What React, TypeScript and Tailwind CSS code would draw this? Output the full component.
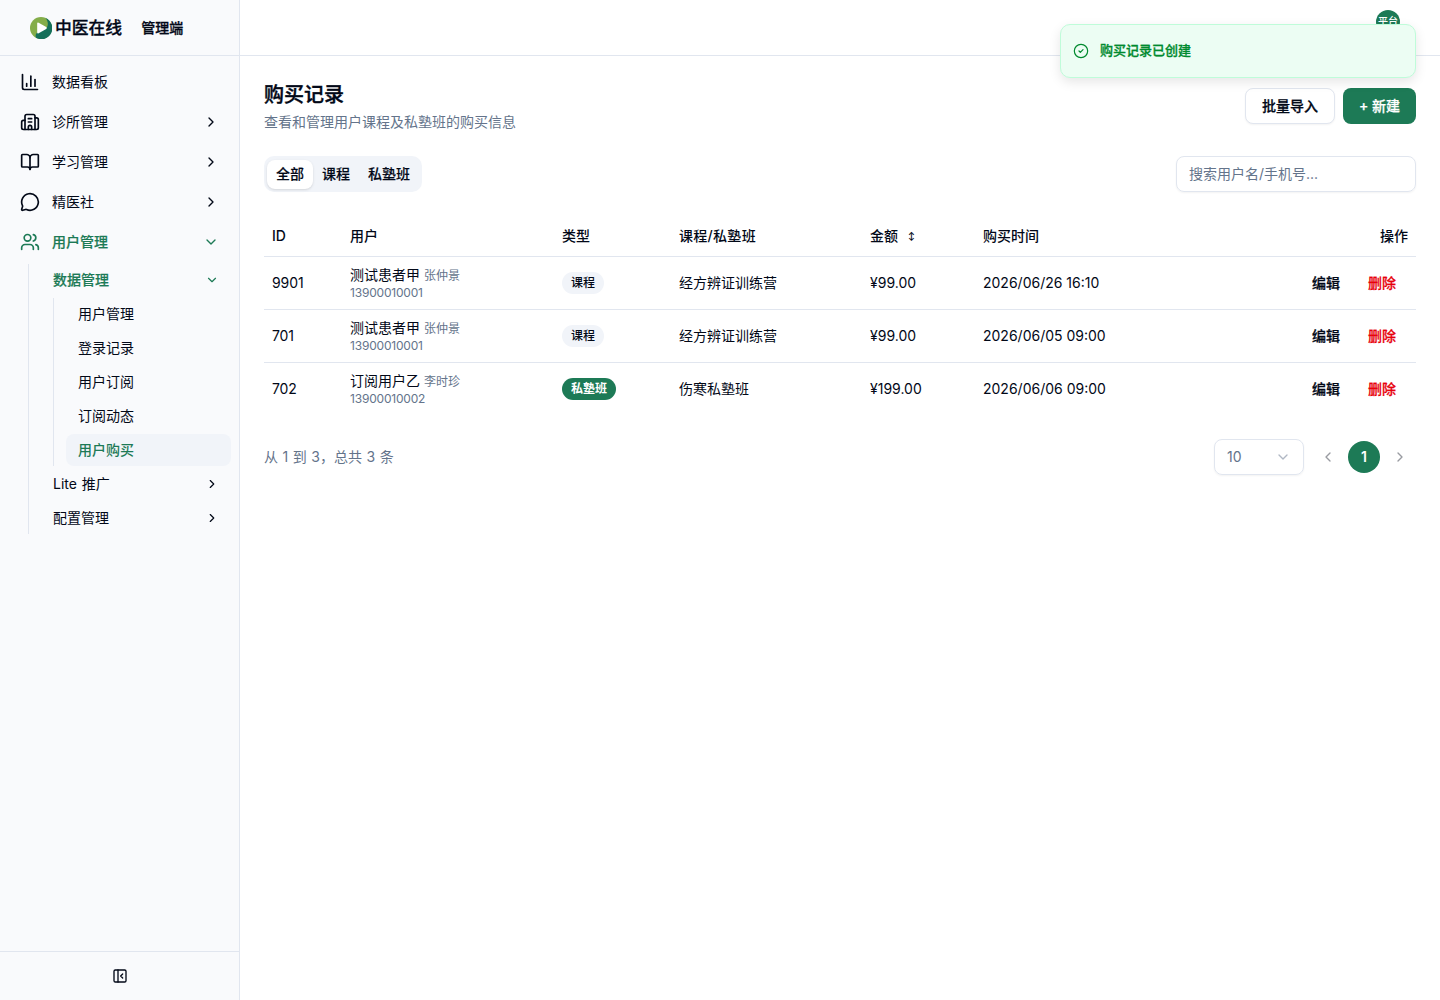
import React from 'react';
import {
  BookOpen,
  Building2,
  ChartColumn,
  ChevronDown,
  ChevronLeft,
  ChevronRight,
  CircleCheck,
  MessageCircle,
  PanelLeftClose,
  Users,
} from 'lucide-react';

const records = [
  { id: '9901', user: '测试患者甲', realName: '张仲景', phone: '13900010001', type: '课程', name: '经方辨证训练营', amount: '¥99.00', time: '2026/06/26 16:10' },
  { id: '701', user: '测试患者甲', realName: '张仲景', phone: '13900010001', type: '课程', name: '经方辨证训练营', amount: '¥99.00', time: '2026/06/05 09:00' },
  { id: '702', user: '订阅用户乙', realName: '李时珍', phone: '13900010002', type: '私塾班', name: '伤寒私塾班', amount: '¥199.00', time: '2026/06/06 09:00' },
];

const menu = [
  { label: '数据看板', icon: ChartColumn },
  { label: '诊所管理', icon: Building2, arrow: true },
  { label: '学习管理', icon: BookOpen, arrow: true },
  { label: '精医社', icon: MessageCircle, arrow: true },
];

const userPages = ['用户管理', '登录记录', '用户订阅', '订阅动态', '用户购买'];

const Logo = () => (
  <svg className="w-[22px] h-[22px]" viewBox="0 0 22 22">
    <circle cx="11" cy="11" r="11" fill="#84ad49" />
    <path d="M15.5 1A11 11 0 1 1 6 20.8C5.2 18.5 5.8 16.5 7.5 15.5L16 11.5C18.8 8.5 18.2 4 15.5 1Z" fill="#15705a" />
    <path d="M7.2 6.6Q7.2 5 8.7 5.7L16.2 9.9Q17.6 11 16.2 12L8.7 16.3Q7.2 17 7.2 15.4Z" fill="#fff" />
  </svg>
);

const Sidebar = () => (
  <aside className="flex w-60 shrink-0 flex-col border-r border-[#e1e6ef] bg-[#f9fafc]">
    <div className="flex h-14 shrink-0 items-center border-b border-[#e1e6ef] pl-[30px]">
      <Logo />
      <span className="ml-[3px] text-[16.8px] font-medium leading-6 [-webkit-text-stroke:0.3px]">中医在线</span>
      <span className="ml-[19px] text-sm font-medium [-webkit-text-stroke:0.3px]">管理端</span>
    </div>

    <nav className="flex-1 px-2 pt-1.5">
      {menu.map(({ label, icon: Icon, arrow }) => (
        <div key={label} className="flex h-10 items-center px-3">
          <Icon className="h-5 w-5" />
          <span className="ml-3 flex-1">{label}</span>
          {arrow && <ChevronRight className="h-4 w-4" />}
        </div>
      ))}
      <div className="flex h-10 items-center px-3 font-medium text-[#1d7a56]">
        <Users className="h-5 w-5" />
        <span className="ml-3 flex-1 [-webkit-text-stroke:0.2px]">用户管理</span>
        <ChevronDown className="h-4 w-4" />
      </div>

      {/* Second level */}
      <div className="ml-5 mt-0.5 flex flex-col gap-0.5 border-l border-[#e1e6ef] pl-3">
        <div className="flex h-8 items-center px-3 font-medium text-[#1d7a56]">
          <span className="flex-1 [-webkit-text-stroke:0.2px]">数据管理</span>
          <ChevronDown className="h-3.5 w-3.5" />
        </div>
        <div className="ml-3 flex flex-col gap-0.5 border-l border-[#e1e6ef] pl-3">
          {userPages.map((page) => (
            <div
              key={page}
              className={
                page === '用户购买'
                  ? 'flex h-8 items-center rounded-lg bg-[#f1f4f9] px-3 font-medium text-[#1d7a56]'
                  : 'flex h-8 items-center px-3'
              }
            >
              {page}
            </div>
          ))}
        </div>
        {['Lite 推广', '配置管理'].map((label) => (
          <div key={label} className="flex h-8 items-center px-3">
            <span className="flex-1 [word-spacing:1px]">{label}</span>
            <ChevronRight className="h-3.5 w-3.5" />
          </div>
        ))}
      </div>
    </nav>

    <div className="flex h-[49px] items-center justify-center border-t border-[#e1e6ef]">
      <PanelLeftClose className="h-4 w-4" />
    </div>
  </aside>
);

const RecordTable = () => (
  <table className="mt-6 w-full table-fixed border-separate border-spacing-0 text-left">
    <colgroup>
      <col className="w-[78px]" />
      <col className="w-[212px]" />
      <col className="w-[117px]" />
      <col className="w-[191px]" />
      <col className="w-[113px]" />
      <col className="w-[200px]" />
      <col />
    </colgroup>
    <thead>
      <tr className="h-[41px] [&>th]:border-b [&>th]:border-[#e1e6ef] [&>th]:px-2 [&>th]:py-0 [&>th]:font-medium">
        <th>ID</th>
        <th>用户</th>
        <th>类型</th>
        <th className="tracking-[0.3px]">课程/私塾班</th>
        <th>
          <span className="flex items-center gap-2.5">
            金额 <span className="text-[8px] font-bold leading-none">↕</span>
          </span>
        </th>
        <th>购买时间</th>
        <th className="text-right">操作</th>
      </tr>
    </thead>
    <tbody>
      {records.map((r) => (
        <tr key={r.id} className="h-[53px] [&>td]:border-b [&>td]:border-[#e1e6ef] [&>td]:px-2 [&>td]:py-0 last:[&>td]:border-transparent">
          <td className="tracking-[-0.1px]">{r.id}</td>
          <td>
            <div className="leading-5">
              {r.user} <span className="text-xs text-[#64748b]">{r.realName}</span>
            </div>
            <div className="text-xs leading-4 tracking-[-0.2px] text-[#64748b]">{r.phone}</div>
          </td>
          <td>
            <span
              className={
                r.type === '私塾班'
                  ? 'inline-flex h-[22px] items-center rounded-full bg-[#1d7a56] px-[9px] align-middle text-xs font-semibold text-white'
                  : 'inline-flex h-[22px] items-center rounded-full bg-[#f1f4f9] px-[9px] align-middle text-xs font-medium'
              }
            >
              {r.type}
            </span>
          </td>
          <td>{r.name}</td>
          <td>{r.amount}</td>
          <td>{r.time}</td>
          <td>
            <div className="flex justify-end gap-7 pr-3 font-medium [-webkit-text-stroke:0.25px]">
              <span>编辑</span>
              <span className="text-[#e7000b]">删除</span>
            </div>
          </td>
        </tr>
      ))}
    </tbody>
  </table>
);

const Toast = () => (
  <div className="absolute right-6 top-6 flex h-[54px] w-[356px] items-center rounded-[10px] border border-[#bffcd9] bg-[#ecfdf3] pl-3 text-[13px] font-medium text-[#008a2e] shadow-[0_4px_12px_rgba(0,0,0,0.1)]">
    <CircleCheck className="h-4 w-4" strokeWidth={1.8} />
    <span className="ml-[11px] pb-0.5 [-webkit-text-stroke:0.3px]">购买记录已创建</span>
  </div>
);

const App = () => {
  return (
    <div className="relative flex h-[1000px] w-full overflow-hidden bg-white font-['Inter','Noto_Sans_CJK_SC',sans-serif] text-sm text-[#020817]">
      <Sidebar />

      <div className="flex min-w-0 flex-1 flex-col">
        <header className="flex h-14 shrink-0 items-start justify-end border-b border-[#e1e6ef] pr-10 pt-2.5">
          <div className="flex h-6 w-6 items-center justify-center rounded-full bg-[#1d7a56] pb-0.5 text-[10px] font-medium text-white">
            平台
          </div>
        </header>

        <main className="p-6">
          <div className="flex items-center justify-between">
            <div>
              <h1 className="pt-px text-xl font-medium leading-7 [-webkit-text-stroke:0.4px]">购买记录</h1>
              <p className="mt-[3px] leading-5 text-[#64748b]">查看和管理用户课程及私塾班的购买信息</p>
            </div>
            <div className="flex gap-2 font-medium [-webkit-text-stroke:0.25px]">
              <button className="h-9 w-[90px] rounded-lg border border-[#e1e6ef] bg-white shadow-xs">批量导入</button>
              <button className="h-9 w-[73px] rounded-lg bg-[#1d7a56] text-white">+ 新建</button>
            </div>
          </div>

          <div className="mt-6 flex items-center justify-between">
            <div className="flex h-9 items-center rounded-[10px] bg-[#f1f4f9] p-[3px] font-medium [-webkit-text-stroke:0.15px]">
              <span className="flex h-[29px] items-center rounded-lg bg-white px-[9px] shadow-sm">全部</span>
              <span className="px-[9px]">课程</span>
              <span className="px-[9px]">私塾班</span>
            </div>
            <input
              className="h-9 w-60 rounded-lg border border-[#e1e6ef] px-3 pb-0.5 shadow-xs outline-none placeholder:text-[#64748b]"
              placeholder="搜索用户名/手机号..."
            />
          </div>

          <RecordTable />

          {/* Pagination */}
          <div className="mt-[23px] flex items-center justify-between text-[#64748b]">
            <span className="[word-spacing:0.6px]">从 1 到 3，总共 3 条</span>
            <div className="flex items-center">
              <div className="mr-2 flex h-9 w-[90px] items-center justify-between rounded-lg border border-[#e1e6ef] px-3 shadow-xs">
                10
                <ChevronDown className="h-4 w-4 opacity-50" />
              </div>
              <span className="flex h-8 w-8 items-center justify-center text-[#020817] opacity-40"><ChevronLeft className="h-4 w-4" /></span>
              <span className="mx-1 flex h-8 w-8 items-center justify-center rounded-full bg-[#1d7a56] font-semibold text-white">1</span>
              <span className="flex h-8 w-8 items-center justify-center text-[#020817] opacity-40"><ChevronRight className="h-4 w-4" /></span>
            </div>
          </div>
        </main>
      </div>

      <Toast />
    </div>
  );
};

export default App;
